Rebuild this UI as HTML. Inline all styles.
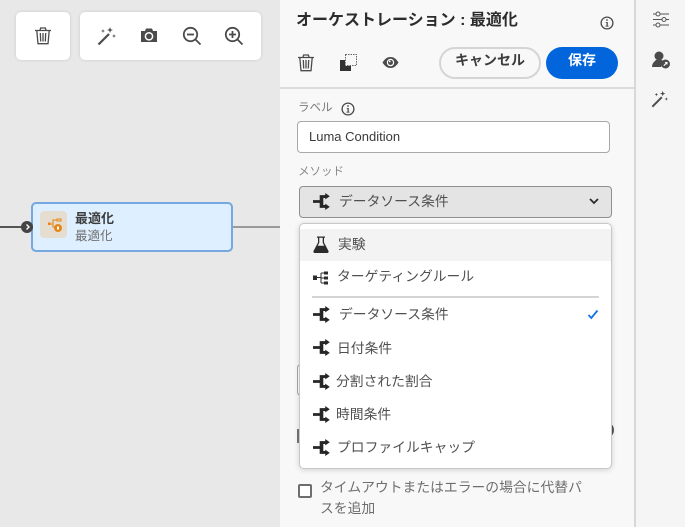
<!DOCTYPE html>
<html><head><meta charset="utf-8">
<style>
html,body{margin:0;padding:0}
body{width:685px;height:527px;position:relative;overflow:hidden;background:#e8e8e8;font-family:"Liberation Sans","Noto Sans CJK JP",sans-serif;color:#4b4b4b}
.a{position:absolute;white-space:nowrap}
svg{position:absolute;overflow:visible}
.card{position:absolute;background:#fff;border-radius:5px;box-shadow:0 0 3px rgba(0,0,0,.14)}
.t{font-size:13.8px;line-height:18px;color:#505050}
</style></head><body>
<svg width="0" height="0" style="position:absolute"><defs>
<symbol id="br" viewBox="0 0 16 16"><path d="M0 6.700h6.300V2h5.200V0l4.300 3-4.300 3V4.700H9.700v6.600h1.800V10l4.300 3-4.300 3v-2H6.300V9.300H0z" fill="#262626"/></symbol>
<symbol id="trash" viewBox="0 0 18 18"><path d="M1 3.500h16M6 3.300 6.600 1h4.800l.6 2.300M2.800 3.700l1.200 13h10l1.200-13M6.300 6l.4 8.500M9 6v8.500M11.700 6l-.4 8.500" fill="none" stroke="#4b4b4b" stroke-width="1.300"/></symbol>
<symbol id="wand" viewBox="0 0 20 20"><path d="M1.500 18.500 12 8" stroke="#4b4b4b" stroke-width="2.200" fill="none"/><path d="M13 1l.8 2.200L16 4l-2.200.8L13 7l-.8-2.200L10 4l2.200-.8zM6 3l.5 1.500L8 5l-1.500.5L6 7l-.5-1.500L4 5l1.500-.5zM17 8l.5 1.500L19 10l-1.500.5L17 12l-.5-1.500L15 10l1.500-.5z" fill="#4b4b4b"/></symbol>
<symbol id="info" viewBox="0 0 14 14"><circle cx="7" cy="7" r="5.900" fill="none" stroke="#4b4b4b" stroke-width="1.300"/><path d="M6.200 3.200h1.500v1.500H6.200zM5.800 6h2v3.700h.8v.9H5.500v-.9h1V6.900h-.7z" fill="#4b4b4b"/></symbol>
</defs></svg>

<!-- canvas -->
<div class="a" style="left:0;top:226px;width:24px;height:2px;background:#555"></div>
<div class="a" style="left:232px;top:226px;width:48px;height:2px;background:#9a9a9a"></div>
<div class="card" style="left:16px;top:12px;width:54px;height:48px"></div>
<div class="card" style="left:80px;top:12px;width:181px;height:48px"></div>
<svg style="left:34px;top:27px" width="18" height="18"><use href="#trash"/></svg>
<svg style="left:97px;top:26px" width="20" height="20"><use href="#wand"/></svg>
<svg style="left:140px;top:27px" width="18" height="18" viewBox="0 0 18 18"><path d="M1 4h4l1-2.500h6l1 2.500h4v11H1z" fill="#4b4b4b"/><circle cx="9" cy="9.300" r="3.600" fill="none" stroke="#fff" stroke-width="1.500"/></svg>
<svg style="left:182px;top:26px" width="20" height="20" viewBox="0 0 20 20"><circle cx="8.500" cy="8.500" r="6.700" fill="none" stroke="#4b4b4b" stroke-width="1.800"/><path d="M13.500 13.500 18.500 18.500" stroke="#4b4b4b" stroke-width="1.800"/><path d="M5 8.500h7" stroke="#4b4b4b" stroke-width="1.800"/></svg>
<svg style="left:224px;top:26px" width="20" height="20" viewBox="0 0 20 20"><circle cx="8.500" cy="8.500" r="6.700" fill="none" stroke="#4b4b4b" stroke-width="1.800"/><path d="M13.500 13.500 18.500 18.500" stroke="#4b4b4b" stroke-width="1.800"/><path d="M5 8.500h7M8.500 5v7" stroke="#4b4b4b" stroke-width="1.800"/></svg>

<!-- node -->
<div class="a" style="left:31px;top:202px;width:198px;height:46px;background:#def0ff;border:2px solid #75a7e0;border-radius:5px"></div>
<div class="a" style="left:21px;top:221px;width:12px;height:12px;background:#444;border-radius:50%"></div>
<svg style="left:25px;top:224px" width="6" height="6" viewBox="0 0 6 6"><path d="M1.500 0.500 4 3 1.500 5.500" fill="none" stroke="#fff" stroke-width="1.400"/></svg>
<div class="a" style="left:40px;top:211px;width:27px;height:27px;background:#e5ddd0;border-radius:4px"></div>
<svg style="left:47px;top:217px" width="16" height="16" viewBox="0 0 16 16"><path d="M1 7h3M4 7h2M6 7V3h4M6 7v3h2" fill="none" stroke="#e68619" stroke-width="1.100"/><rect x="1" y="5.500" width="2.500" height="2.500" fill="#e68619"/><rect x="10" y="2" width="4" height="2" fill="none" stroke="#e68619"/><circle cx="11" cy="11" r="4" fill="#e68619"/><rect x="10" y="9.500" width="2" height="3" fill="#fff"/></svg>
<div class="a" style="left:75px;top:210px;font-size:13px;line-height:18px;font-weight:bold;color:#3c3c3c">最適化</div>
<div class="a" style="left:75px;top:227px;font-size:12.5px;line-height:18px;color:#6e6e6e">最適化</div>

<!-- panel -->
<div class="a" style="left:280px;top:0;width:355px;height:527px;background:#f8f8f8"></div>
<div class="a" style="left:280px;top:87px;width:355px;height:2px;background:#dcdcdc"></div>
<div class="a" style="left:634px;top:0;width:2px;height:527px;background:#d8d8d8"></div>
<div class="a" style="left:636px;top:0;width:49px;height:527px;background:#f5f5f5"></div>

<div class="a" style="left:296px;top:10px;font-size:16px;line-height:22px;font-weight:bold;color:#2c2c2c">オーケストレーション : 最適化</div>
<svg style="left:600px;top:16px" width="14" height="14"><use href="#info"/></svg>
<svg style="left:297px;top:54px" width="18" height="18"><use href="#trash"/></svg>
<svg style="left:340px;top:54px" width="17" height="17" viewBox="0 0 17 17"><path d="M0 6h5v6h6v5H0z" fill="#333"/><rect x="5.500" y="0.500" width="11" height="11" fill="none" stroke="#666" stroke-width="1" stroke-dasharray="1.500 1"/></svg>
<svg style="left:382px;top:56px" width="17" height="13" viewBox="0 0 17 13"><path d="M.5 6.500C3 2.500 5.500 1 8.500 1s5.500 1.500 8 5.500c-2.500 4-5 5.500-8 5.500S3 10.500.5 6.500z" fill="#4b4b4b"/><circle cx="8.500" cy="6.500" r="3.700" fill="#fff"/><circle cx="8.500" cy="6.500" r="2.500" fill="#4b4b4b"/><rect x="7" y="4.700" width="1.500" height="1.500" fill="#fff"/></svg>
<div class="a" style="left:439px;top:47px;width:98px;height:28px;border:2px solid #d5d5d5;border-radius:16px;text-align:center;font-size:14px;line-height:23px;font-weight:bold;color:#3c3c3c">キャンセル</div>
<div class="a" style="left:546px;top:47px;width:72px;height:32px;background:#0265dc;border-radius:16px;text-align:center;font-size:14px;line-height:27px;font-weight:bold;color:#fff">保存</div>

<!-- right rail -->
<svg style="left:652px;top:11px" width="18" height="17" viewBox="0 0 18 17" fill="none" stroke="#555" stroke-width="1"><path d="M1 3h3M8 3h9M1 8.500h9M14 8.500h3M1 14h3M8 14h9"/><circle cx="6" cy="3" r="2"/><circle cx="12" cy="8.500" r="2"/><circle cx="6" cy="14" r="2"/></svg>
<svg style="left:651px;top:50px" width="20" height="20" viewBox="0 0 20 20"><circle cx="8" cy="6" r="4.500" fill="#4b4b4b"/><path d="M1 17c0-4 3-6 4-7h6l2 2-3 5z" fill="#4b4b4b"/><circle cx="14.500" cy="14" r="4.500" fill="#4b4b4b"/><path d="M12.800 15.700 16 12.500M14 12.500h2v2" stroke="#fff" stroke-width="1.100" fill="none"/></svg>
<svg style="left:651px;top:90px" width="18" height="18"><use href="#wand"/></svg>

<!-- form -->
<div class="a" style="left:298px;top:100px;font-size:11.5px;line-height:16px;color:#7a7a7a">ラベル</div>
<svg style="left:341px;top:102px" width="14" height="14"><use href="#info"/></svg>
<div class="a" style="left:297px;top:121px;width:311px;height:30px;background:#fff;border:1px solid #a8a8a8;border-radius:4px;font-size:13px;line-height:29px;color:#3a3a3a;text-indent:11px">Luma Condition</div>
<div class="a" style="left:298px;top:164px;font-size:11.5px;line-height:16px;color:#8a8a8a">メソッド</div>
<div class="a" style="left:299px;top:186px;width:311px;height:30px;background:#e4e4e4;border:1px solid #8f8f8f;border-radius:4px"></div>
<svg style="left:313px;top:193px" width="17" height="17"><use href="#br"/></svg>
<div class="a t" style="left:339px;top:193px">データソース条件</div>
<svg style="left:589px;top:198px" width="10" height="7" viewBox="0 0 10 7"><path d="M1 1l4 4 4-4" fill="none" stroke="#2c2c2c" stroke-width="1.800"/></svg>

<!-- hidden fields behind menu -->
<div class="a" style="left:297px;top:364px;width:10px;height:30px;border:1px solid #a8a8a8;border-right:0;border-radius:4px 0 0 4px;background:#fff"></div>
<div class="a" style="left:297px;top:429px;width:8px;height:14px;background:#777"></div>
<div class="a" style="left:606px;top:424px;width:8px;height:12px;background:#555;border-radius:50%"></div>

<!-- menu -->
<div class="a" style="left:299px;top:223px;width:311px;height:244px;background:#fff;border:1px solid #c8c8c8;border-radius:5px;box-shadow:0 1px 6px rgba(0,0,0,.16)"></div>
<div class="a" style="left:300px;top:229px;width:311px;height:32px;background:#f3f3f3"></div>
<svg style="left:313px;top:236px" width="16" height="17" viewBox="0 0 16 17"><path d="M4 .5h8v1.300h-1V6.500l4.500 8.500c.4 1-.2 2-1.300 2H1.800C.7 17 .1 16 .5 15L5 6.500V1.800H4z" fill="#2c2c2c"/><path d="M6.300 1.800h3.400v5l1.500 3H4.800l1.500-3z" fill="#f3f3f3"/></svg>
<div class="a t" style="left:338px;top:236px">実験</div>
<svg style="left:313px;top:271px" width="16" height="14" viewBox="0 0 16 14" fill="#2c2c2c"><rect x="0" y="4.500" width="4" height="4.500"/><rect x="11" y="0.500" width="4" height="3"/><rect x="11" y="5.500" width="4" height="3"/><rect x="11" y="10.500" width="4" height="3"/><path d="M4 6.500h4.500M8 2h3M8 7h3M8 12h3M8 2v10" stroke="#2c2c2c" fill="none"/></svg>
<div class="a t" style="left:337px;top:268px">ターゲティングルール</div>
<div class="a" style="left:312px;top:296px;width:287px;height:2px;background:#d5d5d5"></div>

<svg style="left:313px;top:306px" width="17" height="17"><use href="#br"/></svg>
<div class="a t" style="left:339px;top:306px">データソース条件</div>
<svg style="left:587px;top:309px" width="12" height="11" viewBox="0 0 12 11"><path d="M1.500 6 4.300 9 10.500 1.500" fill="none" stroke="#1473e6" stroke-width="1.800"/></svg>

<svg style="left:313px;top:339px" width="17" height="17"><use href="#br"/></svg>
<div class="a t" style="left:337px;top:340px">日付条件</div>
<svg style="left:313px;top:373px" width="17" height="17"><use href="#br"/></svg>
<div class="a t" style="left:336px;top:373px">分割された割合</div>
<svg style="left:313px;top:406px" width="17" height="17"><use href="#br"/></svg>
<div class="a t" style="left:336px;top:406px">時間条件</div>
<svg style="left:313px;top:439px" width="17" height="17"><use href="#br"/></svg>
<div class="a t" style="left:337px;top:439px">プロファイルキャップ</div>

<!-- checkbox -->
<div class="a" style="left:298px;top:484px;width:10px;height:10px;border:2px solid #6e6e6e;border-radius:2px;background:#fff"></div>
<div class="a" style="left:320px;top:477px;font-size:13.8px;line-height:21px;color:#6e6e6e">タイムアウトまたはエラーの場合に代替パ<br>スを追加</div>
</body></html>
